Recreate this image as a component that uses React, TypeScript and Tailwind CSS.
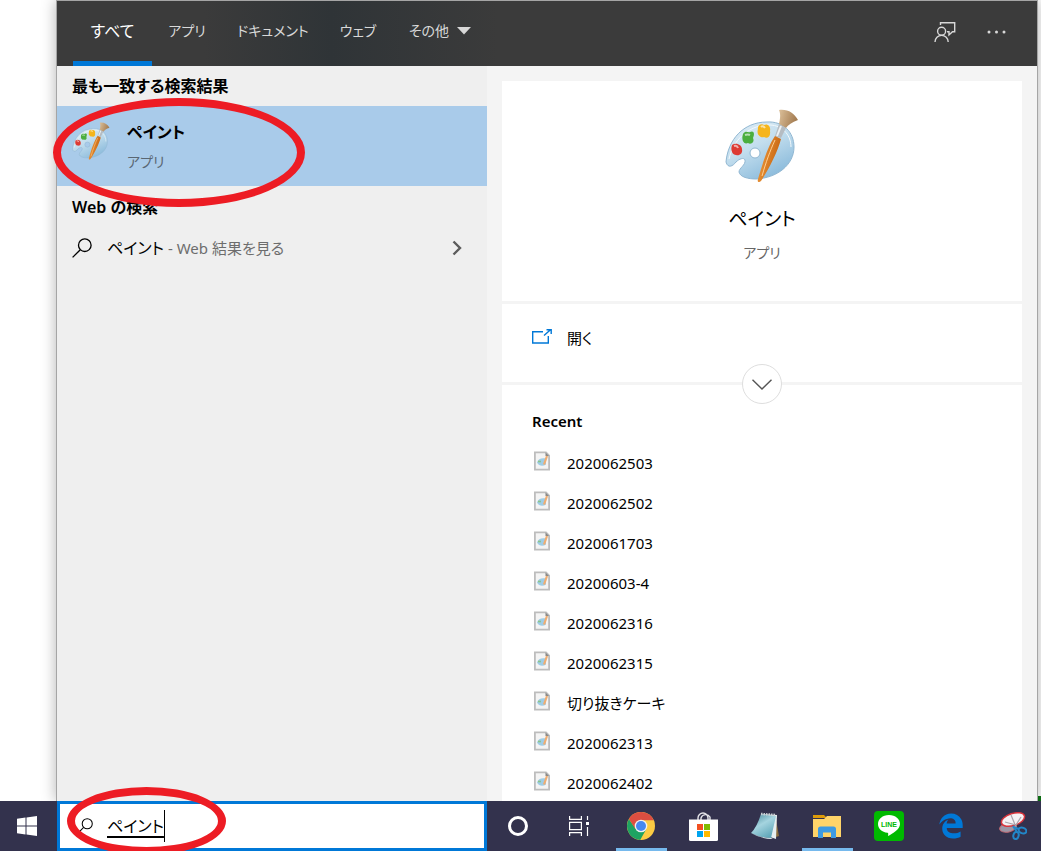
import type { ReactNode } from "react";
import { FaEdgeLegacy } from "react-icons/fa6";

const recentFiles = [
  "2020062503",
  "2020062502",
  "2020061703",
  "20200603-4",
  "2020062316",
  "2020062315",
  "切り抜きケーキ",
  "2020062313",
  "2020062402",
];

function PaintIcon({ className }: { className: string }) {
  return (
    <svg viewBox="0 0 74 74" className={className} aria-hidden="true">
      <defs>
        <linearGradient id="palette" x1="0" y1="0" x2="0.6" y2="1">
          <stop offset="0" stopColor="#e3eff7" />
          <stop offset="0.5" stopColor="#c3deee" />
          <stop offset="1" stopColor="#8dbcdc" />
        </linearGradient>
        <linearGradient id="handle" x1="0" y1="0" x2="1" y2="0.4">
          <stop offset="0" stopColor="#f6a444" />
          <stop offset="1" stopColor="#c4620f" />
        </linearGradient>
        <linearGradient id="bristle" x1="0" y1="0" x2="1" y2="0.3">
          <stop offset="0" stopColor="#dcc09a" />
          <stop offset="1" stopColor="#a37b50" />
        </linearGradient>
      </defs>
      <path
        fillRule="evenodd"
        d="M1 53C3 31 18 13 42 13C58 12 69 23 69 38C69 56 52 69 31 70C23 70 15 68 14 63C14 59 21 56 20 51C19 48 14 50 11 53C8 57 3 60 1 53ZM30 39A5 5 0 1 0 30 49A5 5 0 1 0 30 39Z"
        fill="url(#palette)"
        stroke="#91b7d2"
        strokeWidth="1"
      />
      <path d="M4 50C8 32 22 17 42 16C56 15 66 25 66 38" fill="none" stroke="#f3f9fc" strokeWidth="1" />
      <path d="M7 36C11 33 17 36 17 40C18 45 14 47 11 46C8 46 5 42 7 36Z" fill="#dd3b34" />
      <path d="M18 25C21 21 23 24 25 23C29 21 30 25 28 29C30 33 26 36 23 34C19 36 16 31 18 25Z" fill="#4bae3f" />
      <path d="M33 20C32 16 37 14 39 16C43 14 46 18 45 22C46 28 42 30 39 28C36 29 31 26 33 20Z" fill="#f5b51b" />
      <path d="M9 37q3-1 4 2M20 26q3-1 5 0M36 18q2-2 4 1" fill="none" stroke="#fff" strokeOpacity=".6" strokeWidth="2" />
      <path d="M54 1C63 0 69 4 73 11C67 13 63 16 61 19L54 15C55 10 56 6 54 1Z" fill="url(#bristle)" />
      <path d="M54 15L61 19L56 29L50 27Z" fill="#b5bcc2" />
      <path d="M56 17L52 27" stroke="#edf1f3" strokeWidth="2" />
      <path d="M50 27L56 30C53 42 44 60 36 72C34 74 32 73 33 70C38 53 43 37 50 27Z" fill="url(#handle)" />
      <path d="M50 31C45 42 41 53 37 67" fill="none" stroke="#ffd092" strokeWidth="1" />
    </svg>
  );
}

function ImageFileIcon() {
  return (
    <svg viewBox="0 0 16 19" className="h-5 w-4" aria-hidden="true">
      <path d="M.9.9H12L15.1 4V18.1H.9Z" fill="#f4f4f4" stroke="#bdbdbd" strokeWidth="1.8" />
      <path d="M11.5 1V4.5H15Z" fill="#888" />
      <path d="M3 11C4 7 8 6 12 7V13C9 15 5 15 3 11Z" fill="#9fcde6" />
      <path d="M4 10h3" stroke="#8cc58a" strokeWidth="1.6" />
      <path d="M13 4.5L10 13" stroke="#f0ad71" strokeWidth="2.2" />
    </svg>
  );
}

function SearchIcon({ className }: { className: string }) {
  return (
    <svg viewBox="0 0 20 20" className={className} fill="none" stroke="currentColor" strokeWidth="1.3" aria-hidden="true">
      <circle cx="12.8" cy="7.2" r="6.3" />
      <path d="M8.3 11.7L.6 19.4" />
    </svg>
  );
}

function Tab({ width, active, children }: { width: string; active?: boolean; children: ReactNode }) {
  return (
    <button
      type="button"
      className={`flex h-full shrink-0 items-center justify-center gap-2 border-b-5 whitespace-nowrap ${width} ${
        active ? "border-[#0078d7] text-base text-white" : "border-transparent text-sm text-[#d8d8d8]"
      }`}
    >
      {children}
    </button>
  );
}

function Header() {
  return (
    <header className="flex h-[66px] items-stretch border-t border-[#a5a5a5] bg-linear-to-r from-[#3b3b3b] from-15% via-[#2f3437] via-28% to-[#3b3b3b] to-45% px-4">
      <nav className="flex flex-1">
        <Tab width="w-[79px]" active>すべて</Tab>
        <Tab width="w-[70px]">アプリ</Tab>
        <Tab width="w-[102px]">ドキュメント</Tab>
        <Tab width="w-[68px]">ウェブ</Tab>
        <Tab width="w-[96px]">
          その他
          <svg viewBox="0 0 14 8" className="h-2 w-3.5" aria-hidden="true">
            <path d="M0 0H14L7 7.5Z" fill="currentColor" />
          </svg>
        </Tab>
      </nav>
      <button type="button" aria-label="フィードバック" className="grid w-[53px] place-items-center pb-1 text-[#d8d8d8]">
        <svg viewBox="0 0 22 22" className="size-[22px]" fill="none" stroke="currentColor" strokeWidth="1.4" aria-hidden="true">
          <path d="M6.5 4V1.7H20.7V10.7H18.5L15 14V10.7H13" />
          <circle cx="7.6" cy="10.2" r="4" />
          <path d="M1 21C1 17 4 14.4 7.6 14.4S14.2 17 14.2 21" />
        </svg>
      </button>
      <button type="button" aria-label="オプション" className="grid w-[50px] place-items-center pb-1 text-[#d8d8d8]">
        <svg viewBox="0 0 20 4" className="h-1 w-5" fill="currentColor" aria-hidden="true">
          <circle cx="3" cy="2" r="1.5" />
          <circle cx="10.5" cy="2" r="1.5" />
          <circle cx="18" cy="2" r="1.5" />
        </svg>
      </button>
    </header>
  );
}

function Results() {
  return (
    <section className="w-[430px] shrink-0 bg-[#efefef]">
      <h2 className="flex h-10 items-center px-[15px] text-base font-semibold">最も一致する検索結果</h2>
      <button type="button" className="flex h-20 w-full items-start gap-[17px] bg-[#a9cbea] px-[15px] pt-4 text-left">
        <PaintIcon className="size-[38px]" />
        <span className="flex flex-col">
          <span className="text-base leading-5 font-semibold">ペイント</span>
          <span className="pt-1 text-sm leading-8 text-[#5a6773]">アプリ</span>
        </span>
      </button>
      <h2 className="flex h-[42px] items-center px-[15px] text-base font-semibold">Web の検索</h2>
      <button type="button" className="flex h-10 w-full items-center px-[15px] text-left">
        <SearchIcon className="size-5" />
        <span className="pl-[15px] text-base">ペイント</span>
        <span className="flex-1 pl-1 text-[15px] text-[#6d6d6d]">- Web 結果を見る</span>
        <svg viewBox="0 0 10 16" className="mr-2.5 h-4 w-2.5" fill="none" stroke="#5c5c5c" strokeWidth="2.4" aria-hidden="true">
          <path d="M1.5 1.5L8 8L1.5 14.5" />
        </svg>
      </button>
    </section>
  );
}

function Details() {
  return (
    <section className="min-w-0 flex-1 bg-[#f4f4f4] px-[15px] pt-[15px]">
      <div className="flex h-full flex-col gap-[3px]">
        <div className="flex h-[220px] flex-col items-center bg-white pt-7">
          <PaintIcon className="size-[74px]" />
          <h1 className="pt-5 text-[19px] leading-8">ペイント</h1>
          <p className="pt-1 text-sm leading-7 text-[#666]">アプリ</p>
        </div>
        <div className="relative h-[78px] bg-white">
          <button type="button" className="flex h-[68px] w-full items-center gap-[15px] px-[30px] text-left text-[15px]">
            <svg viewBox="0 0 20 18" className="h-[18px] w-5" fill="none" stroke="#0078d7" strokeWidth="1.4" aria-hidden="true">
              <path d="M11 2.7H.7V14H16.3V7" />
              <path d="M12 6.500L18.500 .7M14.500 .7H19.200V5" />
            </svg>
            開く
          </button>
          <button
            type="button"
            aria-label="展開"
            className="absolute -bottom-[22px] left-1/2 grid size-10 -translate-x-1/2 place-items-center rounded-full border border-[#dedede] bg-white"
          >
            <svg viewBox="0 0 20 11" className="h-[11px] w-5" fill="none" stroke="#555" strokeWidth="1.4" aria-hidden="true">
              <path d="M.5 .7L10 10L19.5 .7" />
            </svg>
          </button>
        </div>
        <div className="flex-1 bg-white px-[30px] pt-6">
          <h2 className="text-[15px] leading-6 font-semibold">Recent</h2>
          <ul className="pt-2 text-[15px]">
            {recentFiles.map((name) => (
              <li key={name}>
                <button type="button" className="flex h-10 w-full items-center gap-[17px] pl-0.5 text-left">
                  <ImageFileIcon />
                  <span className="pt-1">{name}</span>
                </button>
              </li>
            ))}
          </ul>
        </div>
      </div>
    </section>
  );
}

function TaskButton({ label, width = "w-[62px]", open, children }: { label: string; width?: string; open?: boolean; children: ReactNode }) {
  return (
    <button type="button" aria-label={label} className={`flex shrink-0 flex-col items-center ${width}`}>
      <span className="grid flex-1 place-items-center">{children}</span>
      {open && <span className="-mt-[3px] h-[3px] w-[51px] bg-[#76b9ed]" />}
    </button>
  );
}

function Taskbar() {
  return (
    <footer className="flex h-[50px] overflow-hidden bg-[#33324d]">
      <TaskButton label="スタート" width="w-[57px]">
        <svg viewBox="0 0 20 20" className="mr-1 size-5" fill="#fff" aria-hidden="true">
          <path d="M0 2.8L8.5 1.6V9.5H0ZM9.5 1.4L20 0V9.5H9.5ZM0 10.5H8.5V18.4L0 17.2ZM9.5 10.5H20V20L9.5 18.6Z" />
        </svg>
      </TaskButton>
      <label className="flex w-[430px] shrink-0 items-center border-3 border-[#0078d7] bg-white pl-[17px] text-base">
        <SearchIcon className="size-4" />
        <input
          type="text"
          aria-label="検索"
          defaultValue="ペイント"
          className="ml-3.5 field-sizing-content leading-8 underline decoration-2 underline-offset-4 outline-none"
        />
        <span className="h-8 w-px bg-black" />
      </label>
      <TaskButton label="Cortana" width="w-[61px]">
        <span className="block size-5 rounded-full border-3 border-white" />
      </TaskButton>
      <TaskButton label="タスク ビュー">
        <svg viewBox="0 0 20 20" className="size-5" fill="none" stroke="#fff" strokeWidth="1.2" aria-hidden="true">
          <path d="M.6 0V3.4H12.4V0M.6 20V16.6H12.4V20M.6 6.4H12.4V13.6H.6ZM18.5 0V4M18.5 11V20" />
          <path d="M17 6h3v3h-3z" fill="#fff" stroke="none" />
        </svg>
      </TaskButton>
      <TaskButton label="Chrome" open>
        <svg viewBox="0 0 28 28" className="size-7" aria-hidden="true">
          <circle cx="14" cy="14" r="14" fill="#fbcb43" />
          <path d="M1.9 7A14 14 0 0 0 13.2 28L19.2 17.2L8.8 17Z" fill="#1ea362" />
          <path d="M14 8.2H26.7A14 14 0 0 0 1.9 7L8.5 17Z" fill="#dc4e41" />
          <circle cx="14" cy="14" r="6.3" fill="#f1f1f1" />
          <circle cx="14" cy="14" r="5" fill="#4688f1" />
        </svg>
      </TaskButton>
      <TaskButton label="Microsoft Store">
        <svg viewBox="0 0 29 29" className="size-[29px]" aria-hidden="true">
          <path d="M9 8V6A5 5 0 0 1 19 6V8M12 8V6A5 5 0 0 1 21 5V8" fill="none" stroke="#e5e5e9" strokeWidth="1.4" />
          <path d="M0 7.5H29V27.5Q29 29 27.5 29H1.5Q0 29 0 27.5Z" fill="#fff" />
          <path d="M8 12h6v6h-6z" fill="#f25022" />
          <path d="M15 12h6v6h-6z" fill="#7fba00" />
          <path d="M8 19h6v6h-6z" fill="#00a4ef" />
          <path d="M15 19h6v6h-6z" fill="#ffb900" />
        </svg>
      </TaskButton>
      <TaskButton label="メモ帳">
        <svg viewBox="0 0 28 28" className="size-7" aria-hidden="true">
          <defs>
            <linearGradient id="note" x1="0" y1="0" x2="0.6" y2="1">
              <stop offset="0" stopColor="#3e8495" />
              <stop offset="0.5" stopColor="#a5d4df" />
              <stop offset="1" stopColor="#63a9bb" />
            </linearGradient>
          </defs>
          <path d="M24 2L28 24L22 26Z" fill="#8a6c3e" />
          <path d="M10 2L26 3L25 27L19 25Z" fill="#e6eef0" />
          <path d="M10 2L25 4L20 26Q10 26 0 21Q6 15 10 2Z" fill="url(#note)" />
          <path d="M0 21Q10 26 20 26L22 27Q10 27 0 21Z" fill="#e7f5f8" />
          <path d="M10 2L25 3" stroke="#c9d0d3" strokeWidth="2.5" strokeDasharray="1.5 1" />
        </svg>
      </TaskButton>
      <TaskButton label="エクスプローラー" open>
        <svg viewBox="0 0 28 24" className="h-6 w-7" aria-hidden="true">
          <path d="M0 1H11L14 4H0Z" fill="#dd9a09" />
          <path d="M0 5H11L14 2H28V23H0Z" fill="#ffd469" />
          <path d="M5 24V15Q5 12.5 7.5 12.5H20.5Q23 12.5 23 15V24H18V18.5H10V24Z" fill="#3d9ae2" />
        </svg>
      </TaskButton>
      <TaskButton label="LINE">
        <svg viewBox="0 0 30 30" className="size-[30px]" aria-hidden="true">
          <rect width="30" height="30" rx="4" fill="#00b900" />
          <path d="M15 4C8.5 4 4 8.2 4 13C4 17.8 8 21 13.5 21.8C14.5 22 14.3 23 14 25C18 23 26 18.5 26 13C26 8.2 21.5 4 15 4Z" fill="#fff" />
          <text x="15" y="16" textAnchor="middle" fontSize="7" fontWeight="bold" fontFamily="Liberation Sans" fill="#00b900">
            LINE
          </text>
        </svg>
      </TaskButton>
      <TaskButton label="Edge">
        <FaEdgeLegacy className="size-[26px] text-[#0078d7]" />
      </TaskButton>
      <TaskButton label="Snipping Tool">
        <svg viewBox="0 0 28 28" className="size-7" aria-hidden="true">
          <ellipse cx="9" cy="15.5" rx="8.5" ry="4.5" fill="#9b97a6" stroke="#c56a73" transform="rotate(-12 9 15.5)" />
          <ellipse cx="14" cy="7.5" rx="12" ry="6" fill="#f4f2f4" stroke="#d8343c" strokeWidth="1.5" transform="rotate(-18 14 7.5)" />
          <path d="M12 3L17 15M6 10L17 13L22 5" fill="none" stroke="#aaa5ac" strokeWidth="1.2" />
          <ellipse cx="17" cy="23.5" rx="2.6" ry="3.6" fill="none" stroke="#2286c7" strokeWidth="2" transform="rotate(15 17 23.5)" />
          <ellipse cx="23.5" cy="18.5" rx="4" ry="2.8" fill="none" stroke="#2286c7" strokeWidth="2" transform="rotate(20 23.5 18.5)" />
          <path d="M14 14L18 20M14 15L20 17" stroke="#2286c7" strokeWidth="2" />
        </svg>
      </TaskButton>
    </footer>
  );
}

export default function App() {
  return (
    <div className="relative flex min-h-screen flex-col overflow-hidden bg-white font-['Noto_Sans','Noto_Sans_CJK_JP',sans-serif] text-black [font-feature-settings:'palt']">
      <main className="mr-[3px] ml-14 flex flex-1 flex-col border-x border-[#a5a5a5] shadow-[0_0_14px_rgba(0,0,0,0.3)]">
        <Header />
        <div className="flex flex-1">
          <Results />
          <Details />
        </div>
      </main>
      <Taskbar />

      <span className="absolute right-0 bottom-[50px] h-[5px] w-[3px] bg-[#0b6b12]" />

      {/* red marker rings */}
      <span className="pointer-events-none absolute top-[98px] left-[53px] h-[109px] w-[252px] rounded-[50%] border-8 border-[#ed1c24]" />
      <span className="pointer-events-none absolute -bottom-1 left-[67px] h-[68px] w-[159px] rounded-[50%] border-8 border-[#ed1c24]" />
    </div>
  );
}
